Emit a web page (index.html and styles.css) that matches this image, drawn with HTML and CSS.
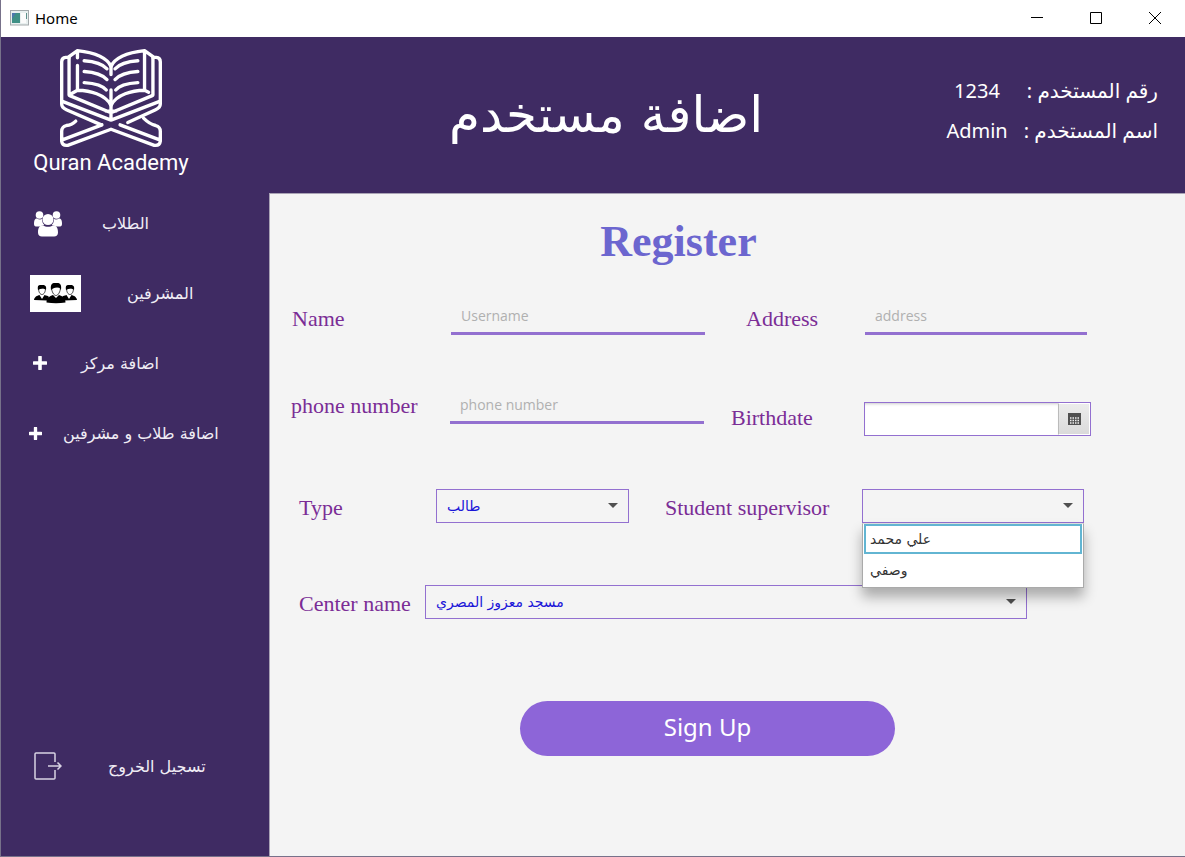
FILE: index.html
```html
<!DOCTYPE html>
<html lang="en">
<head>
<meta charset="utf-8">
<title>Home</title>
<link rel="stylesheet" href="styles.css">
</head>
<body>
<div class="window">
  <div class="titlebar">
    <svg class="app-icon" width="19" height="16" viewBox="0 0 19 16" aria-hidden="true">
      <rect x=".5" y=".5" width="18" height="14.500" fill="#e8efef" stroke="#a3a9ab"/>
      <rect x="2" y="3" width="8" height="10" fill="#3f9086"/>
      <path d="M2 3h4L2 9z" fill="#4d78ad"/>
      <rect x="11" y="3" width="5" height="10" fill="#fbfbfb"/>
      <path d="M16.500 3v6" stroke="#5c8f8a"/>
    </svg>
    <span class="titlebar-name">Home</span>
    <div class="window-buttons">
      <button class="window-button" aria-label="Minimize"><svg width="12" height="12" viewBox="0 0 12 12"><path d="M0 5.500h12" stroke="#000"/></svg></button>
      <button class="window-button" aria-label="Maximize"><svg width="12" height="12" viewBox="0 0 12 12"><path d="M.5.5h11v11H.5z" stroke="#000" fill="none"/></svg></button>
      <button class="window-button" aria-label="Close"><svg width="12" height="12" viewBox="0 0 12 12"><path d="M0 0l12 12M12 0L0 12" stroke="#000"/></svg></button>
    </div>
  </div>

  <header class="header">
    <div class="brand">
      <svg width="104" height="100" viewBox="58 25 310 298" fill="none" stroke="#fff" stroke-width="10" stroke-linecap="round" stroke-linejoin="round" aria-hidden="true">
        <path d="M213 104V80C200 52 158 38 113 33L88 51V165L113 151C150 152 196 163 213 196V150M113 36V54M113 77V151"/>
        <path d="M213 80C226 52 268 38 313 33L338 51V165M325 157L313 151C276 152 230 163 213 196M313 33V151"/>
        <path d="M133 63c30 2 55 10 68 24M133 95c30 2 55 10 68 24M133 128c30 2 55 8 66 22M293 63c-30 2-55 10-68 24M293 95c-30 2-55 10-68 24M293 128c-30 2-55 8-66 22"/>
        <path d="M88 53H78Q66 54 66 66V192Q66 203 80 209L184 254M338 53H348Q360 54 360 66V192Q360 203 346 209L263 247"/>
        <path d="M68 184L213 240L358 184M90 167L213 218L336 167M213 200V240M198 213H228"/>
        <path d="M108 243Q96 255 80 256Q66 260 66 273V303Q68 317 84 315L213 267L342 315Q358 317 360 303V273Q360 260 346 256Q328 252 310 234M68 299L186 254M358 299L240 254"/>
      </svg>
      <span class="brand-name">Quran Academy</span>
    </div>
    <h1 class="page-title" lang="ar" dir="rtl">اضافة مستخدم</h1>
    <dl class="user" lang="ar" dir="rtl">
      <div class="user-row user-row-id"><dt>رقم المستخدم :</dt><dd>1234</dd></div>
      <div class="user-row"><dt>اسم المستخدم :</dt><dd>Admin</dd></div>
    </dl>
  </header>

  <div class="body">
    <nav class="sidebar" lang="ar">
      <a class="nav-item nav-students" href="#students">
        <svg width="28" height="27" viewBox="0 0 28 27" fill="#fff" aria-hidden="true">
          <circle cx="5.500" cy="5" r="3.800"/><circle cx="22.500" cy="5" r="3.800"/>
          <path d="M0 14c0-4 1-5.500 3-5.500 1.500 1 3.500 1.200 5 .5 0 3 1 5 2.500 6-2 0-3 .8-4 1.500H3C1 16.500 0 16 0 14zM28 14c0-4-1-5.500-3-5.500-1.500 1-3.500 1.200-5 .5 0 3-1 5-2.500 6 2 0 3 .8 4 1.500H25c2 0 3-.5 3-2.500z"/>
          <circle cx="14" cy="9.500" r="5.500"/>
          <path d="M4 22.500C4 18 5.500 15.500 9 15.300c3 2 7 2 10 0 3.500.2 5 2.700 5 7.200 0 2.500-1.500 4-4 4H8c-2.500 0-4-1.500-4-4z"/>
        </svg>
        <span dir="rtl">الطلاب</span>
      </a>
      <a class="nav-item nav-supervisors" href="#supervisors">
        <svg width="51" height="37" viewBox="0 0 51 37" aria-hidden="true">
          <path fill="#fff" d="M0 0h51v37H0z"/>
          <path d="M4 25c.5-3.500 3-4 5.500-5l2.500 4 2.500-4c2 .5 3.500 1 4.500 2l-2 3.500zM47 25c-.5-3.500-3-4-5.500-5L39 24l-2.500-4c-2 .5-3.500 1-4.500 2l2 3.500z"/>
          <path d="M16.500 27.500c0-5 3-6 6.500-7.500l3 3 3-3c3.500 1.500 6.500 2.500 6.500 7.500-6 1-13 1-19 0z"/>
          <path fill="#fff" stroke="#000" stroke-width=".7" d="M8.500 13c0 4 1.500 6.500 3.500 6.500s3.500-2.500 3.500-6.500zM36.500 13c0 4 1.500 6.500 3.500 6.500s3.500-2.500 3.500-6.500zM21.500 12c0 5 2.500 8.500 4.500 8.500s4.500-3.500 4.500-8.500z"/>
          <path d="M8 15c-1-6 2-5 4-5s5 0 4 5c-2-2-5-2-8 0zM36 15c-1-6 2-5 4-5s5 0 4 5c-2-2-5-2-8 0zM21 15c-1-7 2-7 5-7s6 0 5 7c-2-4-6-3-10 0z"/>
        </svg>
        <span dir="rtl">المشرفين</span>
      </a>
      <a class="nav-item nav-center" href="#add-center">
        <svg width="14" height="14" viewBox="0 0 14 14" aria-hidden="true"><path d="M7 1v12M1 7h12" stroke="#fff" stroke-width="3.600" stroke-linecap="round"/></svg>
        <span dir="rtl">اضافة مركز</span>
      </a>
      <a class="nav-item nav-users" href="#add-users">
        <svg width="13" height="13" viewBox="0 0 14 14" aria-hidden="true"><path d="M7 1v12M1 7h12" stroke="#fff" stroke-width="3.600" stroke-linecap="round"/></svg>
        <span dir="rtl">اضافة طلاب و مشرفين</span>
      </a>
      <a class="nav-item nav-logout" href="#logout">
        <svg width="28" height="28" viewBox="0 0 28 28" fill="none" stroke="#d9d3e4" stroke-width="1.500" aria-hidden="true">
          <path d="M21 10V2Q21 1 20 1H2Q1 1 1 2V26Q1 27 2 27H20Q21 27 21 26V18M14 14H27M23.500 10.500L27 14L23.500 17.500"/>
        </svg>
        <span dir="rtl">تسجيل الخروج</span>
      </a>
    </nav>

    <main class="content">
      <h2 class="form-title">Register</h2>
      <form class="form">
        <div class="row row-name">
          <label for="name">Name</label>
          <input class="line-input" id="name" type="text" placeholder="Username">
          <label for="address">Address</label>
          <input class="line-input" id="address" type="text" placeholder="address">
        </div>
        <div class="row row-phone">
          <label for="phone">phone number</label>
          <input class="line-input" id="phone" type="tel" placeholder="phone number">
          <label class="label-low" for="birthdate">Birthdate</label>
          <div class="date">
            <input class="date-input" id="birthdate" type="text">
            <button class="date-button" type="button" aria-label="Open calendar">
              <svg width="13" height="12" viewBox="0 0 13 12" aria-hidden="true"><path d="M0 0h13v12H0z" fill="#505050"/><path d="M2 5h9M2 7.500h9M2 10h9" stroke="#eee" stroke-width="1.500" stroke-dasharray="1.500 1"/></svg>
            </button>
          </div>
        </div>
        <div class="row row-type">
          <label for="type">Type</label>
          <div class="combo"><select id="type"><option>طالب</option></select></div>
          <label for="supervisor">Student supervisor</label>
          <div class="combo">
            <select id="supervisor"><option></option><option>علي محمد</option><option>وصفي</option></select>
            <ul class="menu" role="listbox" aria-label="Student supervisor" lang="ar">
              <li class="menu-item menu-item-focused" role="option" aria-selected="true">علي محمد</li>
              <li class="menu-item" role="option" aria-selected="false">وصفي</li>
            </ul>
          </div>
        </div>
        <div class="row row-center">
          <label for="center">Center name</label>
          <div class="combo"><select id="center"><option>مسجد معزوز المصري</option></select></div>
        </div>
        <button class="submit" type="submit">Sign Up</button>
      </form>
    </main>
  </div>
</div>
</body>
</html>
```

FILE: styles.css
```css
* { box-sizing: border-box; }

body {
  margin: 0;
  font-family: "Open Sans", "DejaVu Sans", sans-serif;
  color: #fff;
}

button, input, select { font-family: inherit; }

.window {
  display: flex;
  flex-direction: column;
  min-height: 100vh;
  border-left: 1px solid #77718a;
  border-bottom: 1px solid #77718a;
  background: #3f2b63;
}

.titlebar {
  display: flex;
  align-items: center;
  height: 37px;
  padding: 0 1px 2px 9px;
  background: #fff;
  color: #000;
}

.app-icon { margin-right: 6px; }
.titlebar-name { font: 15px "Noto Sans", sans-serif; }
.window-buttons { display: flex; margin-left: auto; }

.window-button {
  display: grid;
  place-items: center;
  width: 59px;
  height: 35px;
  padding: 0;
  border: 0;
  background: none;
}

.header {
  display: grid;
  grid-template-columns: 270px 1fr 270px;
  align-items: center;
  height: 156px;
}

.brand {
  display: flex;
  flex-direction: column;
  align-items: center;
  align-self: start;
  width: 220px;
  padding-top: 11px;
}

.brand-name { font: 22px/30px Roboto, sans-serif; }

.page-title {
  margin: 0;
  padding-left: 26px;
  text-align: center;
  font: 50px/60px "DejaVu Sans", sans-serif;
  white-space: nowrap;
}

.user {
  display: grid;
  margin: 0;
  padding: 0 27px 8px 0;
  font: 20px/40px "Noto Sans", "DejaVu Sans", sans-serif;
}

.user-row { display: flex; gap: 16px; }
.user-row-id { gap: 27px; }
.user dd { margin: 0; }

.body { display: flex; flex: 1; }

.sidebar {
  display: flex;
  flex-direction: column;
  gap: 10px;
  width: 268px;
  padding-bottom: 60px;
}

.nav-item {
  display: flex;
  align-items: center;
  height: 60px;
  padding-left: 33px;
  color: #f0edf5;
  font: 16px/24px "DejaVu Sans", sans-serif;
  text-decoration: none;
  white-space: nowrap;
}

.nav-item span { padding-top: 2px; }
.nav-students { gap: 40px; }
.nav-supervisors { gap: 46px; padding-left: 29px; }
.nav-center { gap: 34px; padding-left: 32px; }
.nav-users { gap: 21px; padding-left: 28px; }
.nav-logout { gap: 46px; margin-top: auto; }

.content {
  flex: 1;
  min-width: 0;
  border-top: 1px solid #a9a3b5;
  border-left: 1px solid #a9a3b5;
  background: #f4f4f4;
}

.form-title {
  margin: 20px 98px 0 0;
  text-align: center;
  color: #6c66cf;
  font: bold 44px/56px "Liberation Serif", serif;
}

.form { display: flex; flex-direction: column; }

.row {
  display: grid;
  align-items: center;
  height: 36px;
}

.row > * { min-width: 0; }

.row label {
  padding-top: 4px;
  color: #7b2d96;
  font: 22px/28px "Liberation Serif", serif;
  white-space: nowrap;
}

.row-name {
  grid-template-columns: 159fr 254fr 160fr 222fr;
  margin: 29px 98px 0 22px;
}

.row-phone {
  grid-template-columns: 159fr 254fr 160fr 227fr;
  align-items: start;
  height: 48px;
  margin: 53px 94px 0 21px;
}

.row-type {
  grid-template-columns: 137fr 193fr 233fr 222fr;
  margin: 52px 101px 0 29px;
}

.row-center {
  grid-template-columns: 126fr 602fr;
  margin: 60px 158px 0 29px;
}

.row-name label:nth-of-type(2) { padding-left: 41px; }
.row-phone label:nth-of-type(2) { padding-left: 27px; }
.row-type label:nth-of-type(2) { padding-left: 36px; }
.row .label-low { padding-top: 16px; }

.line-input {
  width: 100%;
  height: 36px;
  padding: 0 10px;
  border: 0;
  border-bottom: 3px solid #9370d0;
  background: none;
  color: #333;
  font-size: 14px;
}

.line-input::placeholder { color: #b0b0b0; opacity: 1; }

.date {
  display: flex;
  align-self: end;
  height: 34px;
  border: 1px solid #9370d0;
  background: #fff;
}

.date-input {
  flex: 1;
  min-width: 0;
  border: 0;
  background: #fff;
  box-shadow: inset 0 3px 3px -2px #ccc;
}

.date-button {
  display: grid;
  place-items: center;
  width: 32px;
  padding: 0;
  border: 1px solid #fff;
  border-left: 1px solid #bbb;
  background: linear-gradient(#ececec, #dadada);
}

.combo { position: relative; }

.combo::after {
  content: "";
  position: absolute;
  top: 14px;
  right: 11px;
  border: 5px solid transparent;
  border-top-color: #505050;
  border-bottom: 0;
  pointer-events: none;
}

.combo select {
  display: block;
  width: 100%;
  height: 34px;
  padding: 0 26px 0 10px;
  appearance: none;
  border: 1px solid #9370d0;
  border-radius: 0;
  background: #f4f4f4;
  color: #1a14d8;
  font: 14px/20px "DejaVu Sans", sans-serif;
}

.menu {
  position: absolute;
  z-index: 1;
  top: 100%;
  left: 0;
  width: 100%;
  margin: 0;
  padding: 0 1px 1px;
  list-style: none;
  border: 1px solid #aaa;
  border-top-color: #ddd;
  background: #fff;
  box-shadow: 0 9px 12px rgba(0, 0, 0, 0.3);
}

.menu-item {
  padding: 0 4px;
  border: 2px solid transparent;
  color: #333;
  font: 14px/28px "DejaVu Sans", sans-serif;
}

.menu-item-focused { border-color: #62b5d2; line-height: 26px; }

.submit {
  align-self: center;
  width: 41%;
  height: 55px;
  margin: 81px 40px 0 0;
  padding-bottom: 4px;
  border: 0;
  border-radius: 28px;
  background: #8d65d8;
  color: #fff;
  font: 24px/32px "Noto Sans", sans-serif;
}
```
